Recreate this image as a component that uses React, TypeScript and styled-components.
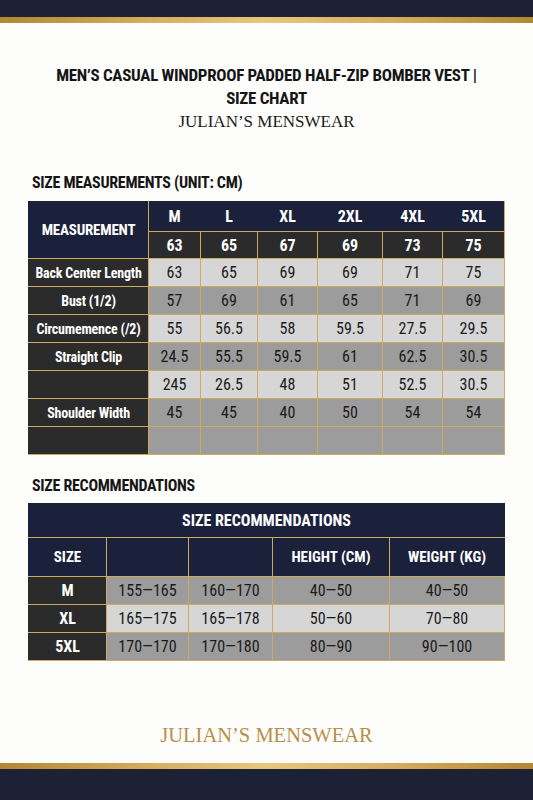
import React from 'react'
import styled, { createGlobalStyle } from 'styled-components'

type Tone = 'light' | 'mid'

type MeasureRow = {
  label: string;
  values: string[];
  tone: Tone;
}

type RecRow = {
  size: string;
  values: string[];
  tone: Tone;
}

const sizes = ['M', 'L', 'XL', '2XL', '4XL', '5XL']
const baseRow = ['63', '65', '67', '69', '73', '75']
const colWidths = [120, 52, 57, 60, 65, 60, 62]

const measurements: MeasureRow[] = [
  { label: 'Back Center Length', values: ['63', '65', '69', '69', '71', '75'], tone: 'light' },
  { label: 'Bust (1/2)', values: ['57', '69', '61', '65', '71', '69'], tone: 'mid' },
  { label: 'Circumemence (/2)', values: ['55', '56.5', '58', '59.5', '27.5', '29.5'], tone: 'light' },
  { label: 'Straight Clip', values: ['24.5', '55.5', '59.5', '61', '62.5', '30.5'], tone: 'mid' },
  { label: '', values: ['245', '26.5', '48', '51', '52.5', '30.5'], tone: 'light' },
  { label: 'Shoulder Width', values: ['45', '45', '40', '50', '54', '54'], tone: 'mid' },
  { label: '', values: ['', '', '', '', '', ''], tone: 'mid' },
]

const recWidths = [78, 82, 84, 117, 115]
const recHeaders = ['', '', 'HEIGHT (CM)', 'WEIGHT (KG)']
const recommendations: RecRow[] = [
  { size: 'M', values: ['155—165', '160—170', '40—50', '40—50'], tone: 'mid' },
  { size: 'XL', values: ['165—175', '165—178', '50—60', '70—80'], tone: 'light' },
  { size: '5XL', values: ['170—170', '170—180', '80—90', '90—100'], tone: 'mid' },
]

const App = () => {
  return (
    <Page>
      <GlobalStyle />
      <TopBar />
      <GoldRule />
      <Main>
        <Title>
          MEN’S CASUAL WINDPROOF PADDED HALF-ZIP BOMBER VEST |<br />SIZE CHART
        </Title>
        <Brand>JULIAN’S MENSWEAR</Brand>

        <SectionHeading>SIZE MEASUREMENTS (UNIT: CM)</SectionHeading>
        <Table>
          <colgroup>
            {colWidths.map((w, i) => <Col key={i} $w={w} />)}
          </colgroup>
          <thead>
            <tr>
              <CornerCell rowSpan={2}>MEASUREMENT</CornerCell>
              {sizes.map((s) => <SizeHead key={s}>{s}</SizeHead>)}
            </tr>
            <tr>
              {baseRow.map((v, i) => <DarkCell key={i}>{v}</DarkCell>)}
            </tr>
          </thead>
          <tbody>
            {measurements.map((row, r) => (
              <tr key={r}>
                <LabelCell>{row.label}</LabelCell>
                {row.values.map((v, i) => <ValueCell key={i} $tone={row.tone}>{v}</ValueCell>)}
              </tr>
            ))}
          </tbody>
        </Table>

        <SectionHeading $second>SIZE RECOMMENDATIONS</SectionHeading>
        <Table>
          <colgroup>
            {recWidths.map((w, i) => <Col key={i} $w={w} />)}
          </colgroup>
          <thead>
            <tr>
              <TitleCell colSpan={5}>SIZE RECOMMENDATIONS</TitleCell>
            </tr>
            <tr>
              <RecHead>SIZE</RecHead>
              {recHeaders.map((h, i) => <RecHead key={i}>{h}</RecHead>)}
            </tr>
          </thead>
          <tbody>
            {recommendations.map((row) => (
              <tr key={row.size}>
                <SizeCell>{row.size}</SizeCell>
                {row.values.map((v, i) => <RecValue key={i} $tone={row.tone}>{v}</RecValue>)}
              </tr>
            ))}
          </tbody>
        </Table>
      </Main>
      <Footer>
        <FooterBrand>JULIAN’S MENSWEAR</FooterBrand>
        <GoldRule />
        <BottomBar />
      </Footer>
    </Page>
  )
}

export default App

//Styled Components
const navy = '#1c213b'
const charcoal = '#2b2b2b'
const gold = '#cdaa60'

const GlobalStyle = createGlobalStyle`
  html, body {
    margin: 0;
    padding: 0;
    background: #fdfdfc;
  }
  body {
    font-family: "Roboto Condensed", Roboto, "Liberation Sans", sans-serif;
  }
`
const Page = styled.div`
  width: 533px;
  min-height: 800px;
  display: flex;
  flex-direction: column;
  background: #fdfdfc;
`
const TopBar = styled.div`
  height: 17px;
  background: #1d2136;
`
const GoldRule = styled.div`
  height: 6px;
  background: linear-gradient(90deg, #b48731 0%, #d7b061 30%, #e8c77a 50%, #d4ab5c 75%, #b48731 100%);
`
const BottomBar = styled.div`
  height: 31px;
  background: #1d2136;
`
const Main = styled.div`
  flex: 1;
  padding-top: 41px;
`
const Title = styled.h1`
  margin: 0;
  font-size: 17px;
  line-height: 23px;
  font-weight: 700;
  letter-spacing: -0.3px;
  color: #151515;
  text-align: center;
`
const Brand = styled.div`
  margin-top: 1px;
  font-family: "Liberation Serif", serif;
  font-size: 17px;
  line-height: 22px;
  color: #1a1a1a;
  text-align: center;
`
const SectionHeading = styled.h2<{ $second?: boolean }>`
  margin: ${(props) => (props.$second ? '21px 0 7px' : '40px 0 8px')};
  padding-left: 32px;
  font-size: 16px;
  line-height: 20px;
  font-weight: 700;
  letter-spacing: -0.3px;
  color: #161616;
`
const Table = styled.table`
  width: 476px;
  margin: 0 auto;
  border-collapse: collapse;
  table-layout: fixed;
  text-align: center;
  font-size: 15px;

  td, th {
    padding: 0;
    border: 1px solid ${gold};
    white-space: nowrap;
  }
`
const Col = styled.col<{ $w: number }>`
  width: ${(props) => props.$w}px;
`
const CornerCell = styled.th`
  background: ${navy};
  color: #fff;
  font-size: 15px;
  font-weight: 700;
  letter-spacing: -0.2px;
  border-left-color: ${navy} !important;
  border-top-color: ${navy} !important;
`
const SizeHead = styled.th`
  height: 29px;
  background: ${navy};
  color: #fff;
  font-size: 16px;
  font-weight: 700;
  border-left-color: ${navy} !important;
  border-right-color: ${navy} !important;
  border-top-color: ${navy} !important;
  &:last-child {
    border-right-color: ${gold} !important;
  }
`
const DarkCell = styled.th`
  height: 26px;
  background: ${charcoal};
  color: #fff;
  font-size: 16px;
  font-weight: 700;
`
const LabelCell = styled.td`
  height: 27px;
  background: ${charcoal};
  color: #fff;
  font-size: 14px;
  font-weight: 700;
  letter-spacing: -0.2px;
  border-left-color: ${charcoal} !important;
`
const ValueCell = styled.td<{ $tone: Tone }>`
  height: 27px;
  background: ${(props) => (props.$tone === 'light' ? '#d6d6d6' : '#9c9c9c')};
  color: #1a1a1a;
  font-size: 16px;
  font-weight: 400;
`
const TitleCell = styled.th`
  height: 33px;
  background: ${navy};
  color: #fff;
  font-size: 16px;
  font-weight: 700;
  border-left-color: ${navy} !important;
  border-top-color: ${navy} !important;
  border-right-color: ${navy} !important;
`
const RecHead = styled.th`
  height: 38px;
  background: ${navy};
  color: #fff;
  font-size: 15px;
  font-weight: 700;
  &:first-child {
    border-left-color: ${navy};
  }
  &:last-child {
    border-right-color: ${navy};
  }
`
const SizeCell = styled.td`
  height: 27px;
  background: ${charcoal};
  color: #fff;
  font-size: 16px;
  font-weight: 700;
  border-left-color: ${charcoal} !important;
`
const RecValue = styled.td<{ $tone: Tone }>`
  height: 27px;
  background: ${(props) => (props.$tone === 'light' ? '#d6d6d6' : '#9c9c9c')};
  color: #1a1a1a;
  font-size: 16px;
  font-weight: 400;
`
const Footer = styled.div`
  display: flex;
  flex-direction: column;
`
const FooterBrand = styled.div`
  padding-bottom: 15px;
  font-family: "Liberation Serif", serif;
  font-size: 20.5px;
  line-height: 26px;
  color: #b8904a;
  text-align: center;
`
